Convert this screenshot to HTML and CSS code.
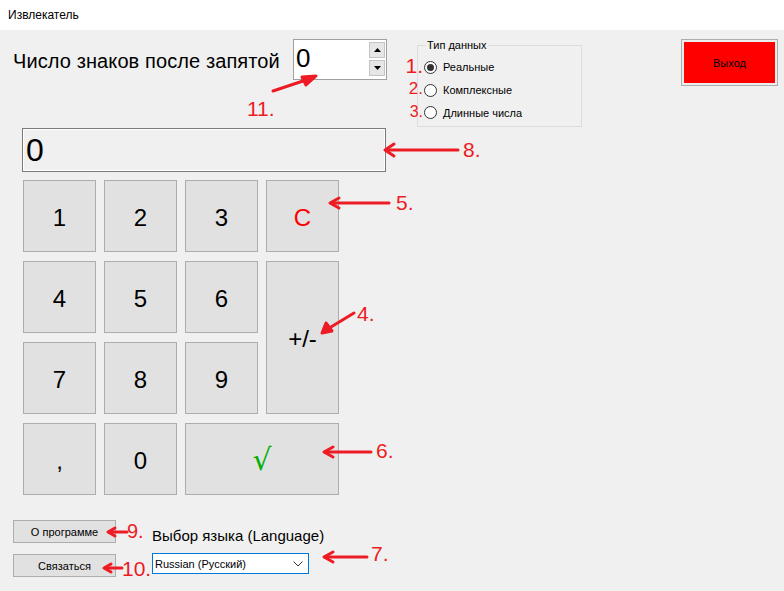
FILE: index.html
```html
<!DOCTYPE html>
<html lang="ru">
<head>
<meta charset="utf-8">
<title>Извлекатель</title>
<link rel="stylesheet" href="styles.css">
</head>
<body>
<div class="window">
  <div class="titlebar">Извлекатель</div>
  <div class="client">
    <div class="top">
      <div class="digits-label">Число знаков после запятой</div>
      <div class="spinner">
        <span class="spin-value">0</span>
        <div class="spin-btns">
          <span class="spin-btn"><svg width="7" height="4" viewBox="0 0 7 4"><path d="M0 4h7L3.5 0z" fill="#000"/></svg></span>
          <span class="spin-btn"><svg width="7" height="4" viewBox="0 0 7 4"><path d="M0 0h7L3.5 4z" fill="#000"/></svg></span>
        </div>
      </div>
      <fieldset class="groupbox">
        <legend>Тип данных</legend>
        <div class="radio-row"><span class="radio checked"></span><span>Реальные</span></div>
        <div class="radio-row"><span class="radio"></span><span>Комплексные</span></div>
        <div class="radio-row"><span class="radio"></span><span>Длинные числа</span></div>
      </fieldset>
      <div class="exit"><div class="exit-inner">Выход</div></div>
    </div>
    <div class="display">0</div>
    <div class="keypad">
      <div class="key">1</div>
      <div class="key">2</div>
      <div class="key">3</div>
      <div class="key red">C</div>
      <div class="key">4</div>
      <div class="key">5</div>
      <div class="key">6</div>
      <div class="key tall">+/-</div>
      <div class="key">7</div>
      <div class="key">8</div>
      <div class="key">9</div>
      <div class="key">,</div>
      <div class="key">0</div>
      <div class="key wide green">√</div>
    </div>
    <div class="bottom">
      <div class="bottom-btns">
        <div class="btn">О программе</div>
        <div class="btn">Связаться</div>
      </div>
      <div class="lang">
        <div class="lang-label">Выбор языка (Language)</div>
        <div class="combo"><span>Russian (Русский)</span>
          <svg width="10" height="6" viewBox="0 0 10 6"><polyline points="0.5,0.5 5,5 9.5,0.5" fill="none" stroke="#333" stroke-width="1"/></svg>
        </div>
      </div>
    </div>
  </div>
  <svg class="annot" width="784" height="591" viewBox="0 0 784 591">
    <g stroke="#ed1c24" stroke-width="3" fill="none" stroke-linecap="round" stroke-linejoin="round">
      <line x1="273" y1="91" x2="312" y2="78"/>
      <polygon points="316,76 302,77 306,85" fill="#ed1c24"/>
      <line x1="386" y1="150" x2="458" y2="150"/>
      <polyline points="394,144 385,150 394,156"/>
      <line x1="331" y1="203" x2="389" y2="203"/>
      <polyline points="339,198 330,203 339,208"/>
      <line x1="354" y1="313" x2="326" y2="330"/>
      <polygon points="322,333 326,323 332,331" fill="#ed1c24"/>
      <line x1="325" y1="452" x2="371" y2="452"/>
      <polyline points="333,447 324,452 333,457"/>
      <line x1="325" y1="557" x2="367" y2="557"/>
      <polyline points="333,552 324,557 333,562"/>
      <line x1="110" y1="532" x2="127" y2="532"/>
      <polyline points="115,528 108,532 115,536"/>
      <line x1="106" y1="568" x2="122" y2="568"/>
      <polyline points="111,564 104,568 111,572"/>
    </g>
    <g fill="#ed1c24" font-family="Liberation Sans, Arial, sans-serif">
      <text x="247" y="116" font-size="21">11.</text>
      <text x="463" y="157" font-size="21">8.</text>
      <text x="396" y="210" font-size="21">5.</text>
      <text x="357" y="321" font-size="21">4.</text>
      <text x="376" y="458" font-size="21">6.</text>
      <text x="371" y="561" font-size="21">7.</text>
      <text x="127" y="538" font-size="20">9.</text>
      <text x="122" y="576" font-size="21">10.</text>
      <text x="423" y="73" font-size="21" text-anchor="end">1.</text>
      <text x="423" y="94" font-size="17" text-anchor="end">2.</text>
      <text x="423" y="117" font-size="16" text-anchor="end">3.</text>
    </g>
  </svg>
</div>
</body>
</html>
```

FILE: styles.css
```css
* { box-sizing: border-box; }
html, body {
  margin: 0;
  padding: 0;
  background: #f0f0f0;
  font-family: "Liberation Sans", Arial, sans-serif;
  color: #000;
}
.window {
  position: relative;
  width: 784px;
  height: 591px;
  overflow: hidden;
}
.titlebar {
  height: 30px;
  background: #fff;
  font-size: 12px;
  padding-left: 8px;
  display: flex;
  align-items: center;
}
.client {
  padding-top: 9px;
}
.top {
  display: flex;
  align-items: flex-start;
  height: 89px;
}
.digits-label {
  margin-left: 13px;
  width: 280px;
  margin-top: 10px;
  font-size: 20px;
  line-height: 24px;
  letter-spacing: 0.1px;
  white-space: nowrap;
}
.spinner {
  width: 94px;
  height: 41px;
  border: 1px solid #a0a0a0;
  background: #fff;
  display: flex;
  justify-content: space-between;
}
.spin-value {
  font-size: 26px;
  line-height: 36px;
  padding-left: 2px;
}
.spin-btns {
  display: flex;
  flex-direction: column;
  gap: 2px;
  padding: 2px 1px 0 0;
}
.spin-btn {
  width: 16px;
  height: 16px;
  background: #e6e6e6;
  border: 1px solid #c4c4c4;
  display: flex;
  align-items: center;
  justify-content: center;
}
.groupbox {
  margin: -1px 0 0 30px;
  width: 165px;
  height: 89px;
  border: 1px solid #dcdcdc;
  padding: 4px 0 0 6px;
  font-size: 11px;
}
.groupbox legend {
  padding: 0 1px;
  margin-left: 2px;
  font-size: 11px;
  line-height: 14px;
}
.radio-row {
  display: flex;
  align-items: center;
  gap: 6px;
  height: 22.7px;
}
.radio {
  width: 13px;
  height: 13px;
  border: 1px solid #333;
  border-radius: 50%;
  background: #fff;
  display: flex;
  align-items: center;
  justify-content: center;
}
.radio.checked::after {
  content: "";
  width: 7px;
  height: 7px;
  border-radius: 50%;
  background: #333;
}
.exit {
  margin-left: auto;
  margin-right: 6px;
  width: 97px;
  height: 47px;
  border: 1px solid #adadad;
  padding: 2px;
  background: #ededed;
}
.exit-inner {
  width: 100%;
  height: 100%;
  background: #ff0000;
  display: flex;
  align-items: center;
  justify-content: center;
  font-size: 11px;
}
.display {
  margin-left: 22px;
  width: 364px;
  height: 44px;
  border: 1px solid #7a7a7a;
  box-shadow: inset 0 0 0 1px #fff;
  font-size: 32px;
  line-height: 42px;
  padding-left: 3px;
}
.keypad {
  margin: 8px 0 0 23px;
  display: grid;
  grid-template-columns: repeat(4, 73px);
  grid-template-rows: repeat(4, 72px);
  column-gap: 8px;
  row-gap: 9px;
}
.key {
  background: #e1e1e1;
  border: 1px solid #adadad;
  display: flex;
  align-items: center;
  justify-content: center;
  font-size: 24px;
  padding-top: 3px;
}
.key.tall { grid-row: span 2; }
.key.wide { grid-column: span 2; }
.key.red { color: #ff0000; }
.key.green {
  color: #00b000;
  font-size: 30px;
  font-family: "DejaVu Sans", sans-serif;
  padding-top: 0;
}
.bottom {
  margin-top: 25px;
  display: flex;
}
.bottom-btns {
  margin-left: 13px;
  width: 103px;
  display: flex;
  flex-direction: column;
  gap: 11px;
}
.btn {
  height: 23px;
  background: #e1e1e1;
  border: 1px solid #adadad;
  display: flex;
  align-items: center;
  justify-content: center;
  font-size: 11px;
}
.lang {
  margin-left: 36px;
  padding-top: 7px;
}
.lang-label {
  font-size: 15px;
  line-height: 18px;
  white-space: nowrap;
}
.combo {
  margin-top: 8px;
  width: 157px;
  height: 21px;
  border: 1px solid #0078d7;
  background: #fff;
  display: flex;
  align-items: center;
  justify-content: space-between;
  padding: 0 5px 0 2px;
  font-size: 11px;
}
.annot {
  position: absolute;
  left: 0;
  top: 0;
  pointer-events: none;
}
```
